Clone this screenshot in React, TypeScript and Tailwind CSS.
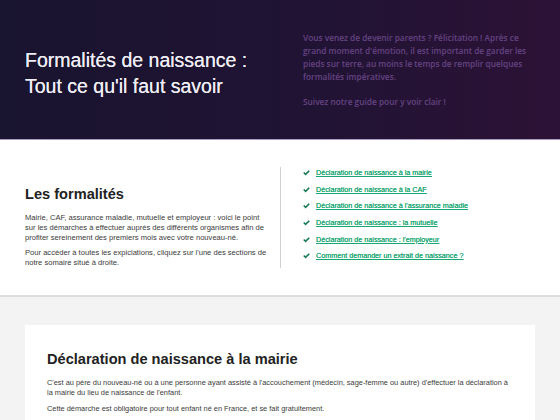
const links = [
  "Déclaration de naissance à la mairie",
  "Déclaration de naissance à la CAF",
  "Déclaration de naissance à l'assurance maladie",
  "Déclaration de naissance : la mutuelle",
  "Déclaration de naissance : l'employeur",
  "Comment demander un extrait de naissance ?",
];

function Check() {
  return (
    <svg viewBox="0 0 12 10" className="h-[6px] w-[7px] shrink-0 fill-[#167a53]">
      <path d="M0.3 5.2 L2.2 3.3 L4.4 5.5 L9.8 0.1 L11.7 2 L4.4 9.3 Z" />
    </svg>
  );
}

export default function App() {
  return (
    <div className="min-h-[420px] bg-[#f3f3f3] font-['Liberation_Sans',Arial,sans-serif]">
      <header className="flex h-[140px] border-b border-[#a99bc4] bg-gradient-to-r from-[#19142f] via-[#1f1333] to-[#2c1236]">
        <div className="flex w-[280px] flex-col justify-center pl-[25px] pt-[6px]">
          <h1 className="text-[19.5px] leading-[26px] text-[#efedf5] [text-shadow:0_0_0.4px_#efedf5]">
            Formalités de naissance :
            <br />
            Tout ce qu'il faut savoir
          </h1>
        </div>
        <div className="flex flex-1 flex-col justify-center pl-[23px] pr-[28px] pt-[2px] font-['Open_Sans',sans-serif] text-[8.3px] font-semibold leading-[12.7px] text-[#654383]">
          <p>
            Vous venez de devenir parents ? Félicitation ! Après ce grand moment d'émotion, il est important de garder les
            pieds sur terre, au moins le temps de remplir quelques formalités impératives.
          </p>
          <p className="mt-[12.7px]">Suivez notre guide pour y voir clair !</p>
        </div>
      </header>

      <section className="flex h-[157px] border-b-2 border-[#dedede] bg-white">
        <div className="w-[280px] pl-[25px] pr-[11px] pt-[44px]">
          <h2 className="text-[14.6px] font-bold leading-[20px] text-[#222]">Les formalités</h2>
          <p className="mt-[9px] text-[7.6px] leading-[9.8px] text-[#3a3a3a]">
            Mairie, CAF, assurance maladie, mutuelle et employeur : voici le point sur les démarches à effectuer auprès des
            différents organismes afin de profiter sereinement des premiers mois avec votre nouveau-né.
          </p>
          <p className="mt-[6px] text-[7.6px] leading-[9.8px] text-[#3a3a3a]">
            Pour accéder à toutes les expiciations, cliquez sur l'une des sections de notre somaire situé à droite.
          </p>
        </div>
        <div className="my-[27px] flex-1 border-l border-[#d0d0d0] pl-[22px] pt-[1px]">
          <ul className="flex flex-col gap-[6.7px]">
            {links.map((l) => (
              <li key={l} className="flex items-center gap-[6px]">
                <Check />
                <a
                  href="#"
                  className="text-[7.2px] leading-[10px] text-[#1ca673] underline underline-offset-[1px] [text-shadow:0_0_0.3px_#1ca673]"
                >
                  {l}
                </a>
              </li>
            ))}
          </ul>
        </div>
      </section>

      <div className="px-[25px] pt-[28px]">
        <article className="bg-white px-[22px] pt-[24px] pb-[20px]">
          <h2 className="text-[14.6px] font-bold leading-[20px] text-[#222]">Déclaration de naissance à la mairie</h2>
          <p className="mt-[9px] text-[7.4px] leading-[10.3px] text-[#3a3a3a]">
            C'est au père du nouveau-né ou à une personne ayant assisté à l'accouchement (médecin, sage-femme ou autre)
            d'effectuer la déclaration à la mairie du lieu de naissance de l'enfant.
          </p>
          <p className="mt-[5px] text-[7.4px] leading-[10.3px] text-[#3a3a3a]">
            Cette démarche est obligatoire pour tout enfant né en France, et se fait gratuitement.
          </p>
        </article>
      </div>
    </div>
  );
}
